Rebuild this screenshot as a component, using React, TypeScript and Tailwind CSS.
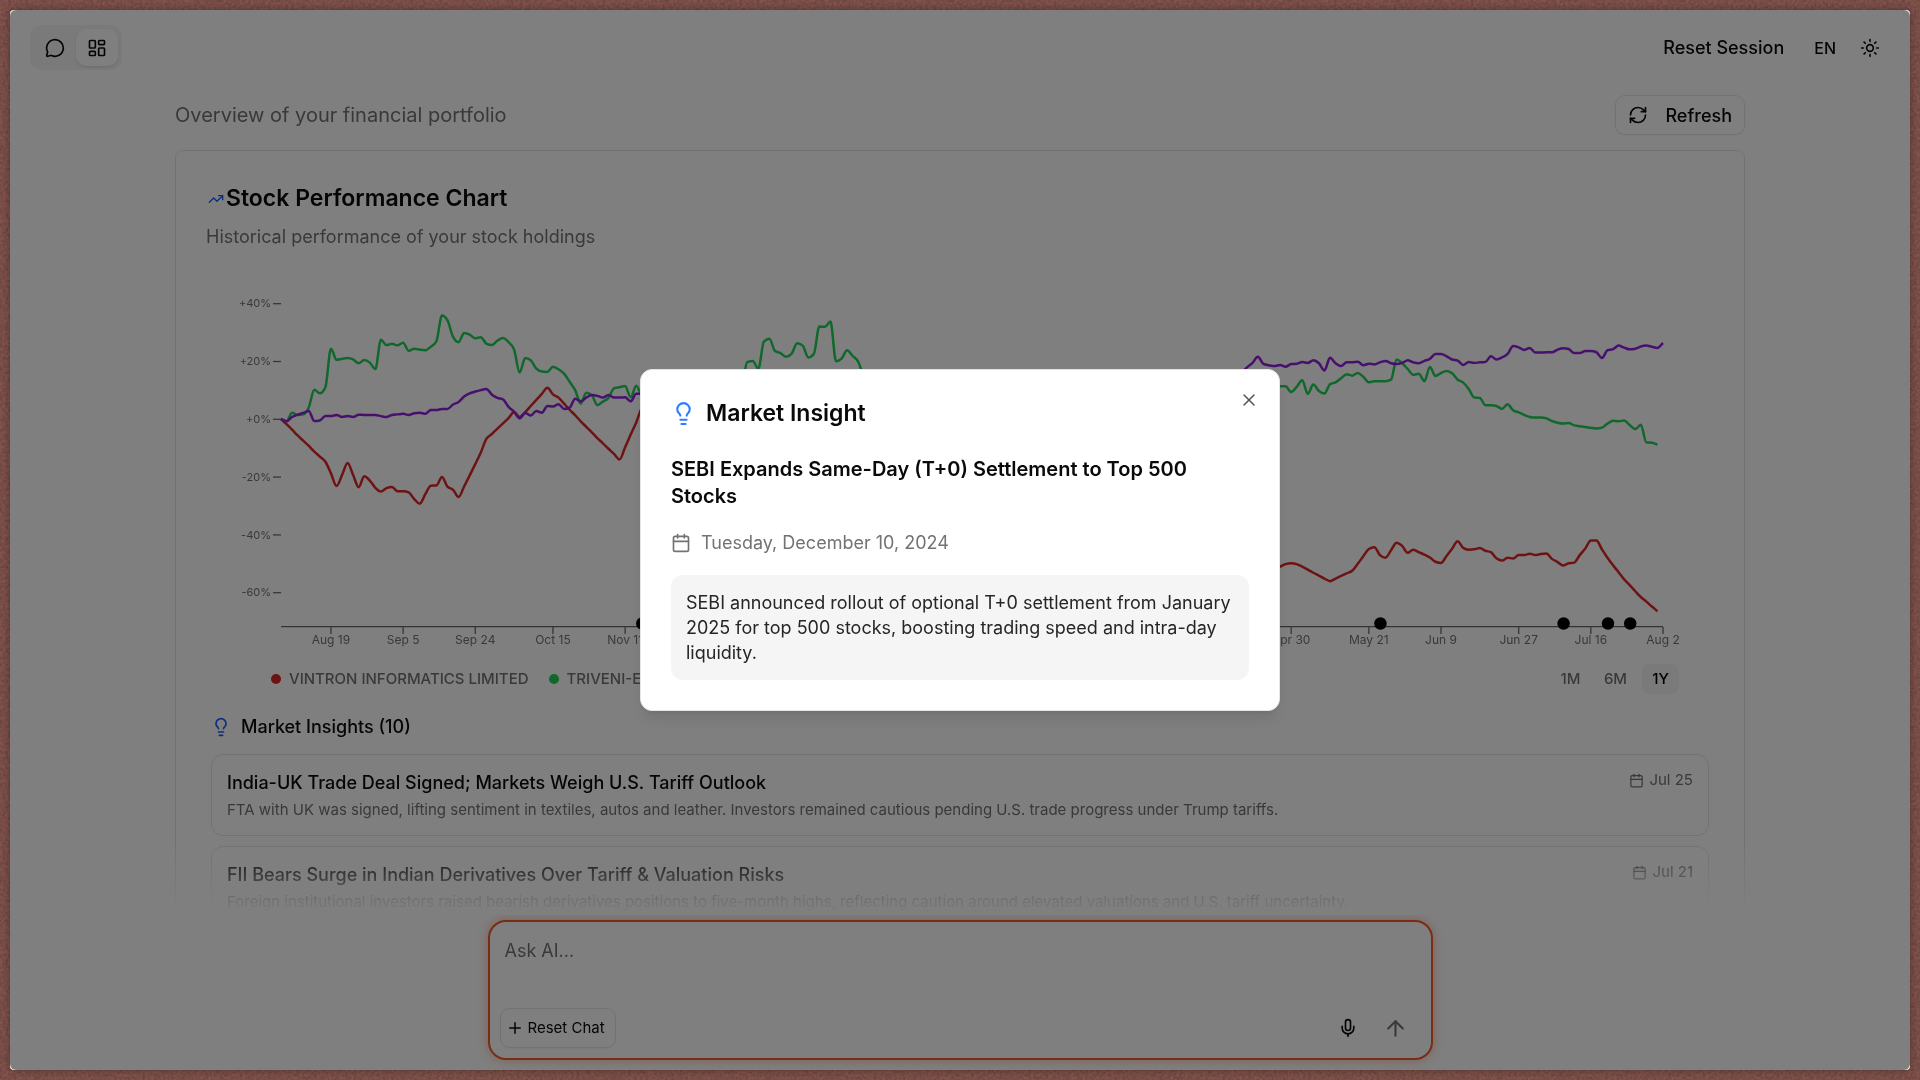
import React from "react";
import {
  ArrowUp,
  Calendar,
  LayoutDashboard,
  Lightbulb,
  MessageCircle,
  Mic,
  Plus,
  RefreshCw,
  Sun,
  TrendingUp,
  X,
} from "lucide-react";

type Run = { start: number; values: number[] };
type Series = { name: string; color: string; dot: string; runs: Run[] };

const SERIES: Series[] = [
  {
    name: "VINTRON INFORMATICS LIMITED",
    color: "#dc2626",
    dot: "bg-[#dc2626]",
    runs: [
      {
        start: 0,
        values: [
          0, -1.8, -3.7, -5.7, -7.5, -9.3, -11.3, -13, -14.8, -18.8, -23.2, -19.4, -15.2, -19.4, -23.6, -19.8, -21.3,
          -23.8, -25.1, -23.9, -23.5, -25, -25, -25.4, -27.7, -29.3, -26, -23.1, -23, -20.1, -23.4, -24.5, -27, -23.3,
          -19.5, -15.6, -11.6, -6.9, -5.2, -3.3, -1.5, 0.3, 2.4, 0.7, 2.4, 4.5, 6.6, 8.7, 10.8, 8.5, 7.4, 5.3, 3.2, 1.3,
          -0.8, -2.7, -4.6, -6.6, -8.4, -10.3, -12.1, -14, -9.8, -5.4, -1.2, 3.7, 5, 6,
        ],
      },
      {
        start: 178,
        values: [
          -52.6, -51.9, -51.1, -50.2, -49.9, -50.2, -51.1, -52.1, -53.2, -54.2, -55.2, -56.1, -55.2, -54.3, -53.4,
          -52.5, -50.1, -47.5, -45, -44.4, -47.1, -48, -45.4, -42.8, -43.9, -46.3, -45.2, -46.1, -46.9, -47.9, -49.4,
          -49.8, -47.4, -44.9, -42.3, -44.6, -45.2, -45.1, -44.6, -45.6, -46.1, -48.2, -49, -48, -48.3, -47.1, -47.1,
          -46.6, -47.1, -46.7, -46.5, -48.4, -49.5, -50.7, -49.9, -49.7, -47.1, -44.8, -42, -42, -45.1, -48, -50.6,
          -53, -55.5, -57.5, -59.6, -61.6, -63.2, -64.9, -66.5,
        ],
      },
    ],
  },
  {
    name: "TRIVENI-ENGINEERING",
    color: "#22d058",
    dot: "bg-[#22d058]",
    runs: [
      {
        start: 0,
        values: [
          0, -0.8, 2.2, 1.4, 1.6, 4, 10.1, 8.9, 11, 24.3, 20.5, 20.8, 21.1, 20.6, 19.3, 20.4, 19.5, 17.3, 27.4, 25.6, 26,
          25.5, 26.4, 23.6, 24.3, 24, 23.8, 25, 26.9, 35.8, 34.1, 28.4, 26.6, 29.8, 29.2, 27.9, 28.3, 26.1, 25.6, 27.1,
          28, 26.6, 24, 16.1, 21.1, 20.3, 17.4, 16.4, 16.3, 18.1, 17.2, 15.7, 12.9, 10, 5.3, 9.1, 8.3, 4.8, 6, 7.3,
          10.6, 11, 11.4, 7.5, 11.5, 8, 7, 8,
        ],
      },
      {
        start: 82,
        values: [
          9, 11, 19.7, 20.1, 17.4, 26.8, 27.8, 23.5, 22.8, 21.5, 22.6, 26.2, 25.4, 21.3, 22.5, 32, 31.9, 33.7, 20,
          20.9, 23.8, 21.8, 19.8, 14.6, 12,
        ],
      },
      {
        start: 179,
        values: [
          11.3, 11.3, 11.3, 9.3, 11.1, 13.4, 8.7, 11.9, 9.7, 8.8, 12, 12.7, 14.1, 15.5, 15, 15.9, 14.6, 12.7, 13.1,
          13.1, 13.1, 13.6, 20.6, 19.3, 17.3, 15.3, 15.7, 13.1, 18, 14.9, 15.9, 16.6, 15.8, 13.6, 12.6, 10.4, 7.4, 7.3,
          4.8, 4.8, 4.5, 3.5, 5.1, 3, 2.3, 1.4, 0.7, 0.5, 0.5, 0.2, -0.7, -1.3, -1.6, -1.4, -2.2, -2.5, -2.8, -3, -3.3,
          -3, -1.6, -0.6, -0.8, -0.5, -2.1, -3.5, -2, -8.1, -8.2, -8.9,
        ],
      },
    ],
  },
  {
    name: "NIFTY 50",
    color: "#9020dc",
    dot: "bg-[#9020dc]",
    runs: [
      {
        start: 0,
        values: [
          0, -0.8, 0.7, 1.5, 2.1, 2.8, -0.7, -0.5, 1, 1, 1.4, 0.7, 1, 0.7, 1.5, 1.4, 1.4, 1.4, 1, 0.7, 1.4, 1.6, 1.8,
          1.4, 2, 2.2, 1.8, 3.1, 3.1, 3.5, 3.5, 5, 5.9, 7.8, 8.9, 9.5, 10, 10.4, 8.4, 7.3, 6.8, 4.2, 2.5, 0.2, 2.1,
          1.2, 2.8, 2.2, 4.5, 4.3, 5.1, 3.5, 3.9, 7, 6.1, 7.4, 8.3, 8, 7.4, 8.3, 7.4, 7.4, 7.5, 6.1, 8.7, 8.7, 8.5, 9,
        ],
      },
      {
        start: 172,
        values: [
          14, 15.8, 17.8, 19.3, 21.5, 19.1, 18.6, 18.3, 18.7, 18.1, 19, 19.1, 19.7, 19.4, 20.3, 19.3, 16.8, 21.2, 19.3,
          18.3, 19.6, 19.6, 19.8, 18.6, 19.1, 18.9, 19.6, 20.1, 19.3, 19, 19.4, 20.3, 19.6, 19.3, 20.1, 20.8, 22.5,
          22.5, 21.7, 20.6, 20.2, 18.7, 19.7, 19.4, 19.6, 19.7, 21.7, 20.6, 21.3, 22.5, 25.3, 24.8, 23.9, 24.6, 23, 23,
          23.1, 23.1, 24, 24.5, 24.2, 22.8, 22.8, 23.5, 23.5, 23.1, 21.1, 23.8, 24.2, 25.4, 24.7, 24.1, 24.3, 25.1,
          25.4, 25, 24.6, 26.3,
        ],
      },
    ],
  },
];

const CHART = { width: 1508, height: 370, left: 75, right: 1457, zero: 139, unit: 2.89, axis: 347, days: 249 };

const X_TICKS: { day: number; label: string }[] = [
  { day: 9, label: "Aug 19" },
  { day: 22, label: "Sep 5" },
  { day: 35, label: "Sep 24" },
  { day: 49, label: "Oct 15" },
  { day: 62, label: "Nov 11" },
  { day: 182, label: "Apr 30" },
  { day: 196, label: "May 21" },
  { day: 209, label: "Jun 9" },
  { day: 223, label: "Jun 27" },
  { day: 236, label: "Jul 16" },
  { day: 249, label: "Aug 2" },
];

const Y_TICKS = [40, 20, 0, -20, -40, -60];
const EVENT_DAYS = [65, 198, 231, 239, 243];

const toX = (day: number) => CHART.left + (day * (CHART.right - CHART.left)) / CHART.days;
const toY = (value: number) => CHART.zero - value * CHART.unit;

/* Monotone cubic interpolation, so that peaks never overshoot the data. */
function curve({ start, values }: Run): string {
  const step = toX(1) - toX(0);
  const ys = values.map(toY);
  const n = ys.length;
  const slope = (i: number) => (ys[i + 1] - ys[i]) / step;
  const tangents = ys.map((_, i) => {
    if (i === 0) return slope(0);
    if (i === n - 1) return slope(n - 2);
    const a = slope(i - 1);
    const b = slope(i);
    if (a * b <= 0) return 0;
    return Math.sign(a) * Math.min(Math.abs(a) * 2, Math.abs(b) * 2, Math.abs(a + b) / 2);
  });
  let d = `M${toX(start)},${ys[0]}`;
  for (let i = 1; i < n; i++) {
    const x0 = toX(start + i - 1);
    const x1 = toX(start + i);
    const third = step / 3;
    d += `C${x0 + third},${ys[i - 1] + tangents[i - 1] * third} ${x1 - third},${ys[i] - tangents[i] * third} ${x1},${ys[i]}`;
  }
  return d;
}

function PerformanceChart() {
  return (
    <svg
      viewBox={`0 0 ${CHART.width} ${CHART.height}`}
      className="block h-auto w-full"
      role="img"
      aria-label="Stock performance over one year"
    >
      <g stroke="#666666" strokeWidth="1.25">
        <line x1={CHART.left} x2={CHART.right} y1={CHART.axis - 0.5} y2={CHART.axis - 0.5} />
        {X_TICKS.map((t) => (
          <line key={t.label} x1={toX(t.day)} x2={toX(t.day)} y1={CHART.axis} y2={CHART.axis + 7} />
        ))}
        {Y_TICKS.map((v) => (
          <line key={v} x1={CHART.left - 8} x2={CHART.left} y1={toY(v) + 0.3} y2={toY(v) + 0.3} />
        ))}
      </g>
      <g fill="#737373" fontSize="12">
        {X_TICKS.map((t) => (
          <text key={t.label} x={toX(t.day)} y={364} textAnchor="middle">
            {t.label}
          </text>
        ))}
      </g>
      <g fill="#737373" fontSize="11">
        {Y_TICKS.map((v) => (
          <text key={v} x={CHART.left - 10} y={toY(v) + 4} textAnchor="end">
            {v >= 0 ? `+${v}%` : `${v}%`}
          </text>
        ))}
      </g>
      {SERIES.map((s) => (
        <g key={s.name} fill="none" stroke={s.color} strokeWidth="2.5">
          {s.runs.map((run) => (
            <path key={run.start} d={curve(run)} />
          ))}
        </g>
      ))}
      {EVENT_DAYS.map((day) => (
        <circle key={day} cx={toX(day) + 0.5} cy={343.5} r="6.25" fill="#000000" />
      ))}
    </svg>
  );
}

const INSIGHTS = [
  {
    title: "India-UK Trade Deal Signed; Markets Weigh U.S. Tariff Outlook",
    text: "FTA with UK was signed, lifting sentiment in textiles, autos and leather. Investors remained cautious pending U.S. trade progress under Trump tariffs.",
    date: "Jul 25",
  },
  {
    title: "FII Bears Surge in Indian Derivatives Over Tariff & Valuation Risks",
    text: "Foreign institutional investors raised bearish derivatives positions to five-month highs, reflecting caution around elevated valuations and U.S. tariff uncertainty.",
    date: "Jul 21",
  },
];

function Header() {
  return (
    <header className="flex items-center justify-between pt-[15px] pr-5 pl-5">
      <div className="flex rounded-xl bg-neutral-100 p-1">
        <button aria-label="Chat" className="flex h-[37px] w-[42px] items-center justify-center rounded-[10px]">
          <MessageCircle size={20} />
        </button>
        <button
          aria-label="Dashboard"
          className="flex h-[37px] w-[42px] items-center justify-center rounded-[10px] bg-white shadow"
        >
          <LayoutDashboard size={20} />
        </button>
      </div>
      <div className="flex items-center pr-[10px] font-medium">
        <button className="text-[18px] leading-[25px]">Reset Session</button>
        <button className="ml-[30px] text-base">EN</button>
        <button aria-label="Toggle theme" className="ml-6">
          <Sun size={20} />
        </button>
      </div>
    </header>
  );
}

function StockCard() {
  return (
    <section className="rounded-lg border border-neutral-200 p-[30px]">
      <div className="flex items-center">
        <span className="flex w-5 justify-center text-blue-600">
          <TrendingUp size={16} />
        </span>
        <h2 className="text-[23px] leading-[35px] font-semibold">Stock Performance Chart</h2>
      </div>
      <p className="mt-2 text-[18px] leading-[25px] text-neutral-500">Historical performance of your stock holdings</p>
      <div className="mt-[31px]">
        <PerformanceChart />
      </div>
      <div className="mt-[14px] flex items-center justify-between pr-[35px] pl-[65px] text-[15px] font-medium text-neutral-500">
        <ul className="flex gap-5">
          {SERIES.map((s) => (
            <li key={s.name} className="flex items-center gap-2">
              <span className={`size-[10px] rounded-full ${s.dot}`} />
              {s.name}
            </li>
          ))}
        </ul>
        <div className="flex gap-2">
          <button className="h-[30px] w-[37px] rounded-lg">1M</button>
          <button className="h-[30px] w-[37px] rounded-lg">6M</button>
          <button className="h-[30px] w-[37px] rounded-lg bg-neutral-100 text-black">1Y</button>
        </div>
      </div>
      <div className="px-[5px]">
        <h3 className="mt-[18px] flex items-center gap-[10px] text-[18px] leading-[30px] font-medium">
          <Lightbulb size={20} className="text-blue-600" />
          Market Insights (10)
        </h3>
        <ul className="mt-3 flex flex-col gap-[10px]">
          {INSIGHTS.map((item) => (
            <li key={item.date} className="flex items-start justify-between rounded-xl border border-neutral-200 p-[15px]">
              <div>
                <h4 className="text-[18px] leading-[25px] font-medium">{item.title}</h4>
                <p className="mt-[5px] text-[15px] leading-5 text-neutral-500">{item.text}</p>
              </div>
              <span className="flex items-center gap-[5px] text-[15px] leading-5 text-neutral-500">
                <Calendar size={15} />
                {item.date}
              </span>
            </li>
          ))}
        </ul>
      </div>
    </section>
  );
}

function Composer() {
  return (
    <form
      onSubmit={(e) => e.preventDefault()}
      className="mx-auto mb-[10px] flex w-full max-w-[945px] flex-col justify-between rounded-[18px] border-2 border-[#f05a28] bg-white p-[10px] shadow-[0_0_12px_rgba(240,90,40,0.4)]"
    >
      <textarea
        aria-label="Ask AI"
        placeholder="Ask AI..."
        className="block h-[76px] w-full resize-none px-[5px] pt-[6px] text-[18px] leading-[25px] outline-none placeholder:text-neutral-500"
      />
      <div className="flex items-center justify-between">
        <button
          type="button"
          className="flex h-10 items-center gap-1 rounded-[10px] border border-neutral-200 pr-[10px] pl-[5px] text-[15px] shadow-xs"
        >
          <Plus size={18} />
          Reset Chat
        </button>
        <div className="flex items-center gap-[25px] pr-[13px]">
          <button type="button" aria-label="Voice input">
            <Mic size={20} />
          </button>
          <button type="submit" aria-label="Send" className="text-neutral-500">
            <ArrowUp size={25} />
          </button>
        </div>
      </div>
    </form>
  );
}

function InsightDialog() {
  return (
    <div className="fixed inset-[10px] flex items-center justify-center rounded-md bg-black/50">
      <div
        role="dialog"
        aria-modal="true"
        aria-labelledby="insight-title"
        className="relative w-full max-w-[640px] rounded-xl border border-neutral-200 bg-white p-[30px] shadow-lg"
      >
        <button aria-label="Close" className="absolute top-5 right-5 text-neutral-600">
          <X size={20} strokeWidth={1.75} />
        </button>
        <h2 id="insight-title" className="flex items-center gap-[10px] text-[23px] leading-[26px] font-semibold">
          <Lightbulb size={25} className="text-blue-500" />
          Market Insight
        </h2>
        <h3 className="mt-[30px] text-xl leading-[27px] font-semibold">
          SEBI Expands Same-Day (T+0) Settlement to Top 500 Stocks
        </h3>
        <p className="mt-5 flex items-center gap-[10px] text-[18px] leading-[25px] text-neutral-500">
          <Calendar size={20} />
          Tuesday, December 10, 2024
        </p>
        <p className="mt-5 rounded-xl bg-neutral-100 p-[15px] text-[18px] leading-[25px] text-neutral-800">
          SEBI announced rollout of optional T+0 settlement from January 2025 for top 500 stocks, boosting trading speed
          and intra-day liquidity.
        </p>
      </div>
    </div>
  );
}

function GrainyBackdrop() {
  return (
    <svg aria-hidden="true" className="fixed inset-0 -z-10 h-full w-full">
      <filter id="grain">
        <feTurbulence type="fractalNoise" baseFrequency="0.35" numOctaves="2" seed="4" />
        <feColorMatrix values="0 0 0 0 0  0 0 0 0 0  0 0 0 0 0  0.35 0 0 0 -0.1" />
      </filter>
      <rect width="100%" height="100%" fill="#84544d" />
      <rect width="100%" height="100%" filter="url(#grain)" />
    </svg>
  );
}

export default function App() {
  return (
    <div className="relative isolate h-screen p-[10px] font-['Inter',sans-serif] text-neutral-950">
      <GrainyBackdrop />
      <div className="flex h-full flex-col overflow-hidden rounded bg-white shadow-[0_0_8px_rgba(0,0,0,0.35)]">
        <Header />
        <main className="relative min-h-0 flex-1 overflow-hidden px-5 pt-[25px]">
          <div className="mx-auto flex max-w-[1570px] flex-col gap-[15px]">
            <div className="flex items-center justify-between">
              <p className="text-xl text-neutral-500">Overview of your financial portfolio</p>
              <button className="flex h-10 items-center gap-[17px] rounded-[10px] border border-neutral-200 px-3 text-[18px] font-medium shadow-xs">
                <RefreshCw size={20} />
                Refresh
              </button>
            </div>
            <StockCard />
          </div>
          <div className="pointer-events-none absolute inset-x-0 bottom-0 h-[70px] bg-linear-to-b from-white/0 to-white" />
        </main>
        <div className="px-5 pt-[5px]">
          <Composer />
        </div>
      </div>
      <InsightDialog />
    </div>
  );
}
